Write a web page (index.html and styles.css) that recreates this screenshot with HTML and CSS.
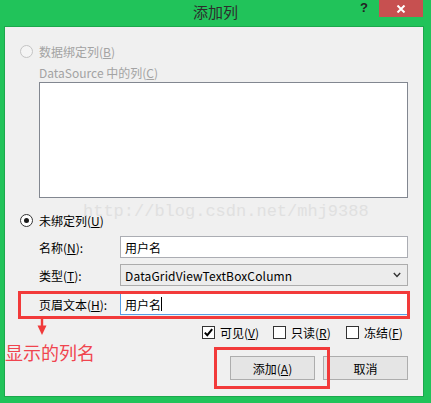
FILE: index.html
```html
<!DOCTYPE html>
<html lang="zh-CN">
<head>
<meta charset="utf-8">
<title>添加列</title>
<link rel="stylesheet" href="styles.css">
</head>
<body>
<div class="window">
  <div class="titlebar">
    <div></div>
    <div class="title">添加列</div>
    <div class="controls">
      <span class="help">?</span>
      <span class="close">
        <svg width="10" height="8" viewBox="0 0 10 8"><path d="M1.5 0.5 L8.5 7.5 M8.5 0.5 L1.5 7.5" stroke="#fff" stroke-width="2" fill="none"/></svg>
      </span>
    </div>
  </div>
  <div class="client">
    <div class="radio-row disabled">
      <span class="radio"></span>
      <span>数据绑定列(<u>B</u>)</span>
    </div>
    <div class="sub-label disabled">DataSource 中的列(<u>C</u>)</div>
    <div class="listbox"></div>
    <div class="radio-row radio-row2">
      <span class="radio checked"></span>
      <span>未绑定列(<u>U</u>)</span>
    </div>
    <div class="form-row row-name">
      <span class="label">名称(<u>N</u>):</span>
      <div class="textbox">用户名</div>
    </div>
    <div class="form-row row-type">
      <span class="label">类型(<u>T</u>):</span>
      <div class="combo">
        <span>DataGridViewTextBoxColumn</span>
        <svg width="8" height="6" viewBox="0 0 8 6"><path d="M0.8 1 L4 4.4 L7.2 1" stroke="#333" stroke-width="1.4" fill="none"/></svg>
      </div>
    </div>
    <div class="form-row row-header">
      <span class="label">页眉文本(<u>H</u>):</span>
      <div class="textbox focused">用户名<span class="caret"></span></div>
    </div>
    <div class="check-row">
      <label class="check-item"><span class="checkbox checked"><svg width="11" height="11" viewBox="0 0 11 11"><path d="M1.8 5.6 L4.3 8.2 L9.2 2.2" stroke="#000" stroke-width="2" fill="none"/></svg></span>可见(<u>V</u>)</label>
      <label class="check-item"><span class="checkbox"></span>只读(<u>R</u>)</label>
      <label class="check-item"><span class="checkbox"></span>冻结(<u>F</u>)</label>
    </div>
    <div class="button-row">
      <button class="btn">添加(<u>A</u>)</button>
      <button class="btn">取消</button>
    </div>

    <div class="watermark">http://blog.csdn.net/mhj9388</div>
    <div class="mark mark-header"></div>
    <div class="mark mark-add"></div>
    <svg class="arrow" width="10" height="18" viewBox="0 0 10 18"><path d="M5 0 V10" stroke="#f03a3a" stroke-width="2.4"/><path d="M0.5 7.5 H9.5 L5 17 Z" fill="#f03a3a"/></svg>
    <div class="note">显示的列名</div>
  </div>
</div>
</body>
</html>
```
FILE: styles.css
```css
* { box-sizing: border-box; }
html, body { margin: 0; padding: 0; }
body {
  width: 431px;
  height: 403px;
  overflow: hidden;
  font-family: "Noto Sans CJK SC", "Noto Sans", sans-serif;
  font-size: 12px;
  color: #000;
}
u { text-decoration: underline; text-underline-offset: 1px; }

.window {
  width: 431px;
  height: 403px;
  background: #21c35a;
}
.titlebar {
  height: 27px;
  display: grid;
  grid-template-columns: 1fr auto 1fr;
}
.title {
  font-size: 15px;
  line-height: 24px;
  color: #2d2d2d;
}
.controls {
  display: flex;
  justify-content: flex-end;
  align-items: flex-start;
}
.help {
  font-family: "Liberation Sans", sans-serif;
  font-weight: bold;
  font-size: 13px;
  line-height: 16px;
  color: #222;
  margin-right: 11px;
}
.close {
  width: 44px;
  height: 17px;
  background: #c75050;
  margin-right: 8px;
  display: flex;
  align-items: center;
  justify-content: center;
}

.client {
  position: relative;
  margin: 0 8px 0 5px;
  height: 369px;
  background: #f0f0f0;
  box-shadow: 0 0 0 1px #1ba84c;
  padding-top: 16px;
}
.disabled { color: #a3a3a3; }

.radio-row {
  height: 16px;
  display: flex;
  align-items: center;
  padding-left: 15px;
}
.radio {
  width: 13px;
  height: 13px;
  border-radius: 50%;
  border: 1px solid #333;
  background: #fff;
  margin-right: 6px;
  display: flex;
  align-items: center;
  justify-content: center;
}
.disabled .radio {
  border-color: #c4c4c4;
  background: #f4f4f4;
}
.radio.checked::after {
  content: "";
  width: 5px;
  height: 5px;
  border-radius: 50%;
  background: #1a1a1a;
}
.sub-label {
  margin-top: 6px;
  height: 16px;
  line-height: 16px;
  padding-left: 34px;
}
.listbox {
  margin: 1px 0 0 34px;
  width: 369px;
  height: 116px;
  background: #fff;
  border: 1px solid #828790;
}
.radio-row2 { margin-top: 14px; }

.form-row {
  display: flex;
  align-items: center;
  height: 22px;
  padding-left: 34px;
}
.row-name { margin-top: 8px; }
.row-type { margin-top: 6px; }
.row-header { margin-top: 7px; }
.label { width: 81px; }
.textbox, .combo {
  width: 288px;
  height: 22px;
  border: 1px solid #abadb3;
  background: #fff;
  display: flex;
  align-items: center;
  padding-left: 4px;
}
.textbox.focused { border-color: #569de5; }
.caret {
  display: inline-block;
  width: 1px;
  height: 14px;
  background: #000;
}
.combo {
  background: #ececec;
  border-color: #acacac;
  justify-content: space-between;
  padding-right: 6px;
  letter-spacing: 0.15px;
}

.check-row {
  margin-top: 9px;
  height: 16px;
  padding-left: 197px;
  display: grid;
  grid-template-columns: 71px 73px auto;
  align-items: center;
}
.check-item {
  display: flex;
  align-items: center;
}
.checkbox {
  width: 13px;
  height: 13px;
  border: 1px solid #333;
  background: #fff;
  margin-right: 5px;
  display: flex;
  align-items: center;
  justify-content: center;
}

.button-row {
  margin-top: 16px;
  display: flex;
  justify-content: flex-end;
  gap: 8px;
  padding-right: 15px;
}
.btn {
  width: 85px;
  height: 24px;
  border: 1px solid #adadad;
  background: #e5e5e5;
  font: inherit;
  color: #000;
  padding: 0;
}

.watermark {
  position: absolute;
  left: 78px;
  top: 175px;
  font-family: "Liberation Mono", monospace;
  font-size: 17px;
  line-height: 20px;
  color: #e0e0e0;
  pointer-events: none;
}
.mark {
  position: absolute;
  border: 3px solid #f23a3a;
}
.mark-header { left: 13px; top: 264px; width: 392px; height: 28px; }
.mark-add { left: 209px; top: 320px; width: 116px; height: 42px; }
.arrow { position: absolute; left: 32px; top: 291px; }
.note {
  position: absolute;
  left: 0;
  top: 313px;
  font-size: 18px;
  line-height: 24px;
  color: #f0444e;
}
```
